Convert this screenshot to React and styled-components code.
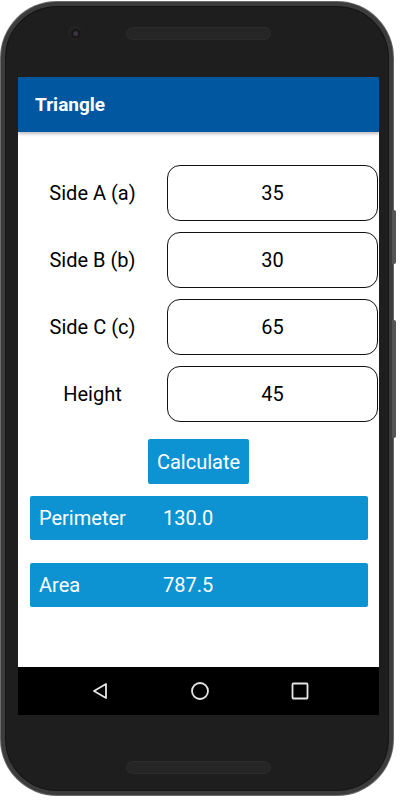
import React, { useState } from 'react'
import styled, { createGlobalStyle } from 'styled-components';

const GlobalStyle = createGlobalStyle`
    body {
        margin: 0;
        background: #fff;
        font-family: Roboto, "Liberation Sans", sans-serif;
        overflow: hidden;
    }
`
const Page = styled.div`
    width: 400px;
    height: 800px;
    padding: 2px 0 0 1px;
    box-sizing: border-box;
    position: relative;
`
const Phone = styled.div`
    position: relative;
    width: 392px;
    height: 793px;
    box-sizing: border-box;
    border: 4px solid #3c3c3c;
    border-radius: 56px;
    background: #1e1e1e;
    box-shadow: 0 0 0 1px #6a6a6a, inset 0 0 0 1px #151515;
    padding: 0 10px 0 13px;
    display: flex;
    flex-direction: column;
`
const SideKey = styled.div`
    position: absolute;
    right: -7px;
    top: ${p => p.top}px;
    width: 4px;
    height: ${p => p.h}px;
    background: #555;
    border-radius: 0 2px 2px 0;
`
const TopBezel = styled.div`
    height: 71px;
    padding-bottom: 17px;
    box-sizing: border-box;
    display: flex;
    align-items: center;
    padding-left: 50px;
`
const Camera = styled.div`
    width: 14px;
    height: 14px;
    border-radius: 50%;
    background: radial-gradient(circle at 55% 55%, #3a3440 0 2px, #151515 3px, #262626 7px);
    margin-right: 45px;
`
const Speaker = styled.div`
    width: 143px;
    height: 11px;
    border-radius: 6px;
    background-color: #141414;
    background-image: radial-gradient(#3a3a3a 0.6px, transparent 0.8px);
    background-size: 2px 2px;
    box-shadow: 0 0 0 1px #2c2c2c;
`
const BottomBezel = styled.div`
    flex: 1;
    display: flex;
    justify-content: center;
    padding-top: 47px;
`
const Screen = styled.div`
    width: 361px;
    height: 638px;
    background: #fff;
    display: flex;
    flex-direction: column;
    overflow: hidden;
`
const AppBar = styled.div`
    height: 55px;
    flex-shrink: 0;
    background: #0157a0;
    display: flex;
    align-items: center;
    padding-left: 17px;
    color: #fff;
    font-size: 19px;
    font-weight: 700;
    box-shadow: 0 2px 3px rgba(0, 0, 0, 0.25);
    position: relative;
    z-index: 1;
`
const Content = styled.div`
    flex: 1;
    padding-top: 33px;
    display: flex;
    flex-direction: column;
`
const Row = styled.div`
    display: grid;
    grid-template-columns: 149px 211px;
    align-items: center;
    height: 56px;
    margin-bottom: 11px;
`
const Label = styled.div`
    text-align: center;
    color: #000;
    font-size: 20px;
`
const Field = styled.input`
    box-sizing: border-box;
    width: 211px;
    height: 56px;
    border: 1px solid #111;
    border-radius: 13px;
    background: #fff;
    text-align: center;
    font-family: Roboto, "Liberation Sans", sans-serif;
    font-size: 20px;
    color: #000;
    outline: none;
    padding: 0;
`
const ButtonWrap = styled.div`
    display: flex;
    justify-content: center;
    margin-top: 6px;
`
const CalcButton = styled.button`
    width: 101px;
    height: 45px;
    border: none;
    border-radius: 2px;
    background: #0d93d2;
    color: #fff;
    font-family: Roboto, "Liberation Sans", sans-serif;
    font-size: 20px;
    padding: 0;
    cursor: pointer;
`
const ResultBar = styled.div`
    margin: ${p => p.top}px 11px 0 12px;
    height: 44px;
    border-radius: 2px;
    background: #0d93d2;
    color: #fff;
    font-size: 20px;
    display: flex;
    align-items: center;
    padding-left: 9px;
`
const ResultName = styled.div`
    width: 124px;
`
const NavBar = styled.div`
    height: 48px;
    flex-shrink: 0;
    background: #000;
    display: flex;
    align-items: center;
    justify-content: center;
    gap: 82px;
    padding-left: 2px;
`

function NavIcon({ kind }) {
    return (
        <svg width="18" height="18" viewBox="0 0 18 18" fill="none" stroke="#e6e6e6" strokeWidth="1.8">
            {kind === 'back' && <path d="M15 2 L3 9 L15 16 Z" strokeLinejoin="round" />}
            {kind === 'home' && <circle cx="9" cy="9" r="8" />}
            {kind === 'recent' && <rect x="1.5" y="1.5" width="15" height="15" rx="1" />}
        </svg>
    )
}

const fields = [
    { key: 'a', label: 'Side A (a)' },
    { key: 'b', label: 'Side B (b)' },
    { key: 'c', label: 'Side C (c)' },
    { key: 'h', label: 'Height' },
]

function App() {
    const [values, setValues] = useState({ a: '35', b: '30', c: '65', h: '45' });
    const [perimeter, setPerimeter] = useState('130.0');
    const [area, setArea] = useState('787.5');

    // perimeter = a + b + c, area = base (c) * height / 2
    const handleCalc = () => {
        const a = parseFloat(values.a) || 0;
        const b = parseFloat(values.b) || 0;
        const c = parseFloat(values.c) || 0;
        const h = parseFloat(values.h) || 0;
        setPerimeter((a + b + c).toFixed(1));
        setArea((0.5 * c * h).toFixed(1));
    }

  return (
    <Page>
        <GlobalStyle />
        <Phone>
            <SideKey top={204} h={54} />
            <SideKey top={314} h={118} />
            <TopBezel><Camera /><Speaker /></TopBezel>
            <Screen>
                <AppBar>Triangle</AppBar>
                <Content>
                    {fields.map(f => (
                        <Row key={f.key}>
                            <Label>{f.label}</Label>
                            <Field value={values[f.key]} onChange={e => setValues({ ...values, [f.key]: e.target.value })} />
                        </Row>
                    ))}
                    <ButtonWrap><CalcButton onClick={handleCalc}>Calculate</CalcButton></ButtonWrap>
                    <ResultBar top={12}><ResultName>Perimeter</ResultName>{perimeter}</ResultBar>
                    <ResultBar top={23}><ResultName>Area</ResultName>{area}</ResultBar>
                </Content>
                <NavBar>
                    <NavIcon kind="back" />
                    <NavIcon kind="home" />
                    <NavIcon kind="recent" />
                </NavBar>
            </Screen>
            <BottomBezel><Speaker /></BottomBezel>
        </Phone>
    </Page>
  )
}

export default App
